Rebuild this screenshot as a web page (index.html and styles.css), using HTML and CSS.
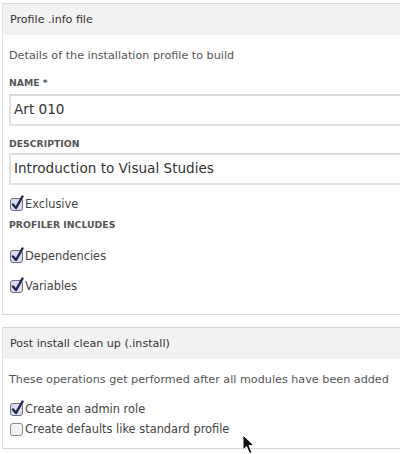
FILE: index.html
```html
<!DOCTYPE html>
<html>
<head>
<meta charset="utf-8">
<link rel="stylesheet" href="styles.css">
</head>
<body>
<div class="page">
  <section class="fieldset first">
    <div class="legend">Profile .info file</div>
    <div class="body">
      <p class="desc">Details of the installation profile to build</p>
      <label class="lbl lbl-name">NAME *</label>
      <div class="input in-name">Art 010</div>
      <label class="lbl lbl-desc">DESCRIPTION</label>
      <div class="input in-desc">Introduction to Visual Studies</div>
      <div class="check c-excl">
        <svg class="cb" width="16" height="17" viewBox="0 0 16 17"><rect x="1.5" y="3.5" width="12" height="12" rx="2.5" fill="#dcdcf0" stroke="#6d6d80"/><path d="M4 9.5 L7 13 L13.5 1.5" fill="none" stroke="#1e2450" stroke-width="2.4" stroke-linecap="round" stroke-linejoin="round"/></svg>
        <span>Exclusive</span>
      </div>
      <label class="lbl lbl-inc">PROFILER INCLUDES</label>
      <div class="check c-dep">
        <svg class="cb" width="16" height="17" viewBox="0 0 16 17"><rect x="1.5" y="3.5" width="12" height="12" rx="2.5" fill="#dcdcf0" stroke="#6d6d80"/><path d="M4 9.5 L7 13 L13.5 1.5" fill="none" stroke="#1e2450" stroke-width="2.4" stroke-linecap="round" stroke-linejoin="round"/></svg>
        <span>Dependencies</span>
      </div>
      <div class="check c-var">
        <svg class="cb" width="16" height="17" viewBox="0 0 16 17"><rect x="1.5" y="3.5" width="12" height="12" rx="2.5" fill="#dcdcf0" stroke="#6d6d80"/><path d="M4 9.5 L7 13 L13.5 1.5" fill="none" stroke="#1e2450" stroke-width="2.4" stroke-linecap="round" stroke-linejoin="round"/></svg>
        <span>Variables</span>
      </div>
    </div>
  </section>
  <section class="fieldset second">
    <div class="legend">Post install clean up (.install)</div>
    <div class="body">
      <p class="desc">These operations get performed after all modules have been added</p>
      <div class="check c-admin">
        <svg class="cb" width="16" height="17" viewBox="0 0 16 17"><rect x="1.5" y="3.5" width="12" height="12" rx="2.5" fill="#dcdcf0" stroke="#6d6d80"/><path d="M4 9.5 L7 13 L13.5 1.5" fill="none" stroke="#1e2450" stroke-width="2.4" stroke-linecap="round" stroke-linejoin="round"/></svg>
        <span>Create an admin role</span>
      </div>
      <div class="check c-def">
        <svg class="cb" width="16" height="17" viewBox="0 0 16 17"><rect x="1.5" y="3.5" width="12" height="12" rx="2.5" fill="#f4f4f4" stroke="#8a8a8a"/></svg>
        <span>Create defaults like standard profile</span>
      </div>
    </div>
  </section>
  <svg class="cursor" width="14" height="22" viewBox="0 0 14 22"><path d="M1 1 L1 16 L4.5 12.5 L7.5 19.5 L10 18.5 L7 11.5 L12 11.5 Z" fill="#111" stroke="#fff" stroke-width="1"/></svg>
</div>
</body>
</html>
```
FILE: styles.css
```css
html, body {
  margin: 0;
  padding: 0;
  background: #fff;
}
.page {
  position: relative;
  width: 400px;
  height: 454px;
  overflow: hidden;
  font-family: "DejaVu Sans", Verdana, sans-serif;
  color: #444;
  padding-top: 3px;
  box-sizing: border-box;
}
.fieldset {
  margin-left: 2px;
  width: 420px;
  border-top: 1px solid #d6d6d6;
  border-left: 1px solid #e4e4e4;
  border-bottom: 1px solid #d6d6d6;
}
.second {
  margin-top: 12px;
}
.legend {
  background: #f2f2f2;
  height: 31px;
  line-height: 32px;
  padding-left: 7px;
  font-size: 11.1px;
  color: #333;
}
.body {
  padding: 0 0 0 6px;
  display: flex;
  flex-direction: column;
  align-items: flex-start;
}
.desc {
  margin: 13px 0 0;
  font-size: 11.2px;
  line-height: 16px;
  color: #555;
}
.lbl {
  display: block;
  font-size: 9.3px;
  font-weight: bold;
  color: #555;
  line-height: 12px;
}
.lbl-name { margin-top: 13px; }
.lbl-desc { margin-top: 12px; }
.lbl-inc { margin-top: 7px; }
.input {
  box-sizing: border-box;
  width: 420px;
  height: 32px;
  border: 2px solid #e2e2e2;
  border-top-color: #d8d8d8;
  padding-left: 3px;
  line-height: 27px;
  font-size: 13.6px;
  color: #333;
  background: #fff;
}
.in-name { margin-top: 5px; }
.in-desc { margin-top: 3px; }
.check {
  display: flex;
  align-items: flex-end;
  height: 17px;
  font-size: 11.4px;
  color: #444;
}
.check span {
  line-height: 15px;
}
.cb { flex: none; }
.c-excl { margin-top: 10px; }
.c-dep { margin-top: 16px; }
.c-var { margin-top: 13px; margin-bottom: 20px; }
.second .desc { margin-top: 13px; }
.c-admin { margin-top: 12px; }
.c-def { margin-top: 3px; margin-bottom: 11px; }
.cursor {
  position: absolute;
  left: 242px;
  top: 434px;
}
```
